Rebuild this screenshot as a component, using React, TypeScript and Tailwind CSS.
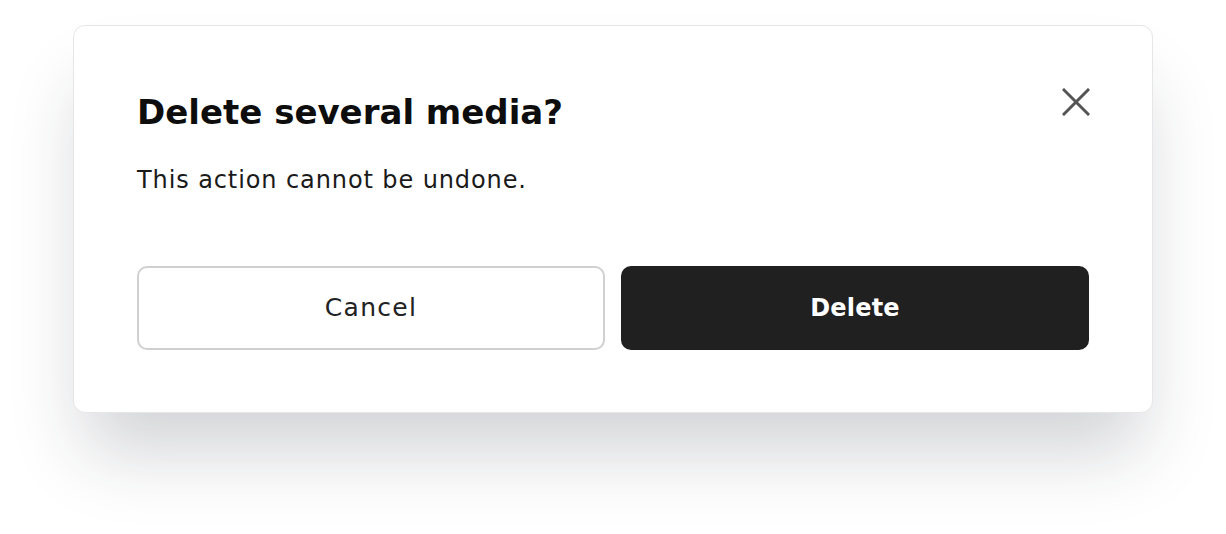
import React from 'react';

const CloseIcon: React.FC = () => (
  <svg width="28" height="28" viewBox="0 0 28 28" fill="none">
    <path d="M2 2L26 26M26 2L2 26" stroke="#555555" strokeWidth="3" strokeLinecap="square" />
  </svg>
);

const App: React.FC = () => {
  return (
    <div className="min-h-screen bg-white pt-[25px] pl-[73px]" style={{ fontFamily: '"DejaVu Sans", sans-serif' }}>
      <div className="relative w-[1080px] rounded-[12px] border border-[#e6e6e8] bg-white px-[63px] pt-[66px] pb-[62px] shadow-[0_50px_70px_-12px_rgba(30,35,50,0.2)]">
        <button className="absolute top-[62px] right-[62px] flex items-center justify-center">
          <CloseIcon />
        </button>
        <h2 className="text-[34px] leading-[40px] font-bold text-[#0d0d0d]">Delete several media?</h2>
        <p className="mt-[32px] text-[24px] leading-[32px] text-[#1a1a1a] tracking-[0.9px]">This action cannot be undone.</p>
        <div className="mt-[70px] grid grid-cols-2 gap-4">
          <button className="h-[84px] rounded-[10px] border-2 border-[#d0d0d0] bg-white text-[25px] text-[#222222] tracking-[1.3px]">Cancel</button>
          <button className="h-[84px] rounded-[10px] bg-[#202020] text-[24px] font-bold text-white tracking-[0.2px]">Delete</button>
        </div>
      </div>
    </div>
  );
};

export default App;
